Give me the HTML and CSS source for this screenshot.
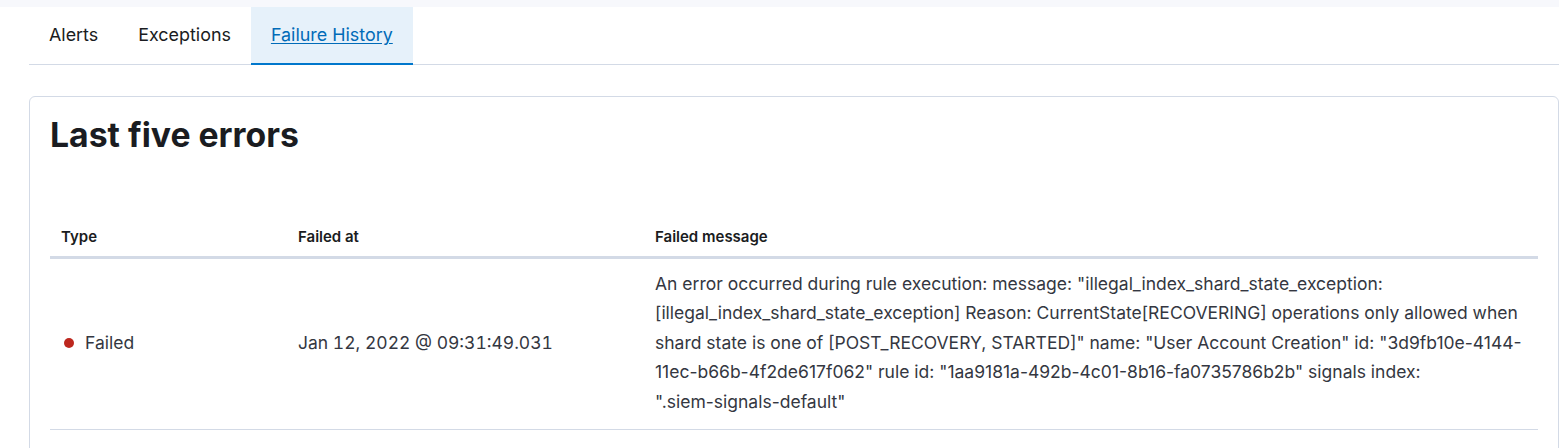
FILE: index.html
```html
<!DOCTYPE html>
<html lang="en">
<head>
<meta charset="utf-8">
<title>Failure History</title>
<link rel="stylesheet" href="styles.css">
</head>
<body>
<div class="topbar"></div>
<nav class="tabs">
  <div class="tab">Alerts</div>
  <div class="tab">Exceptions</div>
  <div class="tab tab-selected"><span class="tab-link">Failure History</span></div>
</nav>
<section class="panel">
  <h2 class="panel-title">Last five errors</h2>
  <table class="errors">
    <colgroup>
      <col class="col-type">
      <col class="col-at">
      <col class="col-msg">
    </colgroup>
    <thead>
      <tr>
        <th>Type</th>
        <th>Failed at</th>
        <th>Failed message</th>
      </tr>
    </thead>
    <tbody>
      <tr>
        <td><span class="status"><span class="dot"></span>Failed</span></td>
        <td class="cell-date">Jan 12, 2022 @ 09:31:49.031</td>
        <td>An error occurred during rule execution: message: "illegal_index_shard_state_exception: [illegal_index_shard_state_exception] Reason: CurrentState[RECOVERING] operations only allowed when shard state is one of [POST_RECOVERY, STARTED]" name: "User Account Creation" id: "3d9fb10e-4144-11ec-b66b-4f2de617f062" rule id: "1aa9181a-492b-4c01-8b16-fa0735786b2b" signals index: <span class="nowrap">".siem-signals-default"</span></td>
      </tr>
    </tbody>
  </table>
</section>
</body>
</html>
```
FILE: styles.css
```css
html, body {
  margin: 0;
  padding: 0;
  background: #ffffff;
}
body {
  font-family: Inter, "Noto Sans", sans-serif;
  color: #343741;
  overflow: hidden;
}
.topbar {
  height: 7px;
  background: #f7f8fc;
}
.tabs {
  display: flex;
  margin-left: 29px;
  border-bottom: 1px solid #d3dae6;
}
.tab {
  padding: 0 20px;
  height: 58px;
  margin-bottom: -1px;
  line-height: 56px;
  font-size: 17.9px;
  color: #1a1c21;
}
.tab-selected {
  background: #e6f1fa;
  box-shadow: inset 0 -2px 0 #0077cc;
  color: #006bb8;
}
.tab-link {
  text-decoration: underline;
  text-underline-offset: 2px;
}
.panel {
  margin: 31px 0 0 29px;
  border: 1px solid #d3dae6;
  border-radius: 6px;
  padding: 18px 20px 0 20px;
  height: 400px;
}
.panel-title {
  margin: 0;
  font-size: 33.75px;
  font-weight: 700;
  line-height: 40px;
  color: #1a1c21;
}
.errors {
  width: 100%;
  margin-top: 63px;
  border-collapse: collapse;
  table-layout: fixed;
}
.col-type { width: 237px; }
.col-at { width: 357px; }
.errors th {
  text-align: left;
  font-size: 15px;
  font-weight: 600;
  line-height: 22px;
  color: #1a1c21;
  padding: 8px 11px;
  border-bottom: 3px solid #d3dae6;
}
.errors td {
  font-size: 17.5px;
  line-height: 29.4px;
  padding: 10px 11px 13px;
  vertical-align: middle;
  border-bottom: 1px solid #d3dae6;
}
.cell-date {
  font-feature-settings: "tnum" 1;
}
.status {
  display: inline-flex;
  align-items: center;
}
.dot {
  width: 10px;
  height: 10px;
  border-radius: 50%;
  background: #bd271e;
  margin: 0 11px 0 3px;
}
.nowrap {
  white-space: nowrap;
}
```
